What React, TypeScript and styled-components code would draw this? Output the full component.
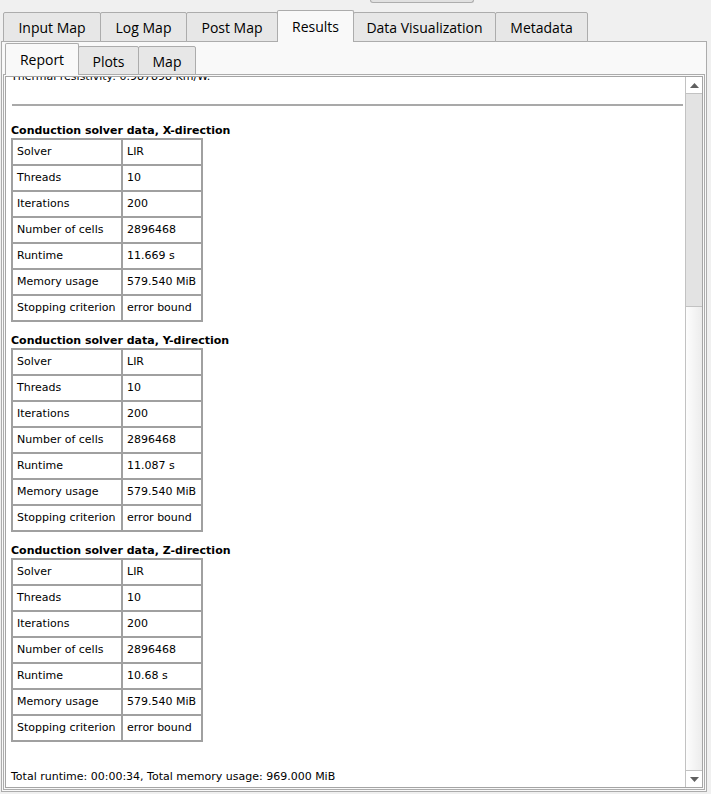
import React from 'react';
import styled, { createGlobalStyle } from 'styled-components';

const GlobalStyle = createGlobalStyle`
  html, body { margin: 0; padding: 0; background: #f0f0f0; overflow: hidden; }
  #root { width: 711px; height: 794px; }
`;

const Window = styled.div`
  width: 711px;
  height: 794px;
  background: #f0f0f0;
  display: flex;
  flex-direction: column;
  box-sizing: border-box;
  font-family: "Open Sans", "Noto Sans", sans-serif;
`;

const Toolbar = styled.div`
  height: 10px;
  display: flex;
  padding-left: 370px;
`;

const ToolButton = styled.div`
  width: 104px;
  height: 3px;
  box-sizing: border-box;
  border: 1px solid #adadad;
  border-top: none;
  border-radius: 0 0 3px 3px;
  background: #e1e1e1;
`;

const TabBar = styled.div<{ $inset: number; $h: number }>`
  display: flex;
  align-items: flex-end;
  height: ${(p) => p.$h}px;
  padding-left: ${(p) => p.$inset}px;
  margin-bottom: -1px;
  position: relative;
  z-index: 1;
`;

const Tab = styled.div<{ $active?: boolean; $h: number; $drop: number; $w: number }>`
  box-sizing: border-box;
  width: ${(p) => p.$w}px;
  height: ${(p) => (p.$active ? p.$h : p.$h - p.$drop)}px;
  padding-top: ${(p) => (p.$active ? 6 : 5)}px;
  margin-right: -1px;
  border: 1px solid #acacac;
  border-bottom: ${(p) => (p.$active ? 'none' : '1px solid #acacac')};
  border-radius: 2px 2px 0 0;
  background: ${(p) => (p.$active ? '#f9f9f9' : '#e7e7e7')};
  font-size: 14px;
  line-height: 19px;
  color: #000;
  text-align: center;
  white-space: nowrap;
  position: relative;
  z-index: ${(p) => (p.$active ? 2 : 1)};
`;

const Pane = styled.div<{ $outer?: boolean }>`
  box-sizing: border-box;
  display: flex;
  flex-direction: column;
  background: #f9f9f9;
  border: 1px solid #acacac;
  padding: ${(p) => (p.$outer ? '0 1px 1px 1px' : '1px')};
  ${(p) => (p.$outer ? 'margin-left: 1px; width: 706px; height: 751px;' : 'flex: 1; min-height: 0;')}
`;

const Browser = styled.div`
  flex: 1;
  min-height: 0;
  display: flex;
  background: #ffffff;
  border: 1px solid #a5a5a5;
`;

const Viewport = styled.div`
  flex: 1;
  min-width: 0;
  overflow: hidden;
  padding: 0 2px 0 5px;
  font-family: "DejaVu Sans", Verdana, sans-serif;
  font-size: 11px;
  line-height: 14px;
  color: #000;
`;

const Doc = styled.div<{ $scroll: number }>`
  margin-top: ${(p) => -p.$scroll}px;
`;

const Para = styled.div<{ $top?: number }>`
  margin-top: ${(p) => p.$top ?? 0}px;
  white-space: nowrap;
`;

const Rule = styled.div`
  margin: 20px 0 0 1px;
  height: 2px;
  background: #a9a9a9;
`;

const Heading = styled.div<{ $top: number }>`
  margin-top: ${(p) => p.$top}px;
  font-weight: bold;
  white-space: nowrap;
`;

const Table = styled.table`
  border-collapse: separate;
  border-spacing: 0;
  border: 1px solid #a0a0a0;
`;

const Cell = styled.td<{ $w: number }>`
  box-sizing: border-box;
  width: ${(p) => p.$w}px;
  min-width: ${(p) => p.$w}px;
  height: 26px;
  padding: 0 4px;
  border: 1px solid #a0a0a0;
  vertical-align: middle;
  white-space: nowrap;
`;

const Scrollbar = styled.div`
  width: 16px;
  display: flex;
  flex-direction: column;
  border-left: 1px solid #c2c2c2;
  background: linear-gradient(to right, #fdfdfd, #ececec);
`;

const ArrowButton = styled.div<{ $down?: boolean }>`
  height: 16px;
  display: flex;
  align-items: center;
  justify-content: center;
  background: #ffffff;
  ${(p) => (p.$down ? 'border-top: 1px solid #c2c2c2;' : '')}
`;

const Track = styled.div`
  flex: 1;
  display: flex;
  flex-direction: column;
`;

const Thumb = styled.div<{ $h: number }>`
  height: ${(p) => p.$h}px;
  box-sizing: border-box;
  background: #e3e3e3;
  border-top: 1px solid #c2c2c2;
  border-bottom: 1px solid #c2c2c2;
`;

const Arrow = ({ down }: { down?: boolean }) => (
  <svg width="9" height="5" viewBox="0 0 9 5">
    {down ? (
      <polygon points="0,0 9,0 4.5,5" fill="#606060" />
    ) : (
      <polygon points="0,5 9,5 4.5,0" fill="#606060" />
    )}
  </svg>
);

type Row = [string, string];

const sections: { dir: string; rows: Row[] }[] = [
  {
    dir: 'X',
    rows: [
      ['Solver', 'LIR'],
      ['Threads', '10'],
      ['Iterations', '200'],
      ['Number of cells', '2896468'],
      ['Runtime', '11.669 s'],
      ['Memory usage', '579.540 MiB'],
      ['Stopping criterion', 'error bound'],
    ],
  },
  {
    dir: 'Y',
    rows: [
      ['Solver', 'LIR'],
      ['Threads', '10'],
      ['Iterations', '200'],
      ['Number of cells', '2896468'],
      ['Runtime', '11.087 s'],
      ['Memory usage', '579.540 MiB'],
      ['Stopping criterion', 'error bound'],
    ],
  },
  {
    dir: 'Z',
    rows: [
      ['Solver', 'LIR'],
      ['Threads', '10'],
      ['Iterations', '200'],
      ['Number of cells', '2896468'],
      ['Runtime', '10.68 s'],
      ['Memory usage', '579.540 MiB'],
      ['Stopping criterion', 'error bound'],
    ],
  },
];

const outerTabs: [string, number][] = [
  ['Input Map', 98],
  ['Log Map', 87],
  ['Post Map', 92],
  ['Results', 77],
  ['Data Visualization', 143],
  ['Metadata', 93],
];
const innerTabs: [string, number][] = [
  ['Report', 74],
  ['Plots', 61],
  ['Map', 58],
];

export default function App() {
  return (
    <>
      <GlobalStyle />
      <Window>
        <Toolbar>
          <ToolButton />
        </Toolbar>
        <TabBar $inset={3} $h={32}>
          {outerTabs.map(([t, w]) => (
            <Tab key={t} $active={t === 'Results'} $h={32} $drop={2} $w={w}>
              {t}
            </Tab>
          ))}
        </TabBar>
        <Pane $outer>
          <TabBar $inset={2} $h={33}>
            {innerTabs.map(([t, w]) => (
              <Tab key={t} $active={t === 'Report'} $h={32} $drop={3} $w={w}>
                {t}
              </Tab>
            ))}
          </TabBar>
          <Pane>
            <Browser>
              <Viewport>
                <Doc $scroll={7}>
                  <Para>Thermal resistivity: 0.987898 Km/W.</Para>
                  <Rule />
                  {sections.map((s, i) => (
                    <React.Fragment key={s.dir}>
                      <Heading $top={i === 0 ? 18 : 12}>
                        Conduction solver data, {s.dir}-direction
                      </Heading>
                      <Table>
                        <tbody>
                          {s.rows.map(([k, v]) => (
                            <tr key={k}>
                              <Cell $w={110}>{k}</Cell>
                              <Cell $w={80}>{v}</Cell>
                            </tr>
                          ))}
                        </tbody>
                      </Table>
                    </React.Fragment>
                  ))}
                  <Para $top={28}>
                    Total runtime: 00:00:34, Total memory usage: 969.000 MiB
                  </Para>
                </Doc>
              </Viewport>
              <Scrollbar>
                <ArrowButton>
                  <Arrow />
                </ArrowButton>
                <Track>
                  <Thumb $h={214} />
                </Track>
                <ArrowButton $down>
                  <Arrow down />
                </ArrowButton>
              </Scrollbar>
            </Browser>
          </Pane>
        </Pane>
      </Window>
    </>
  );
}
